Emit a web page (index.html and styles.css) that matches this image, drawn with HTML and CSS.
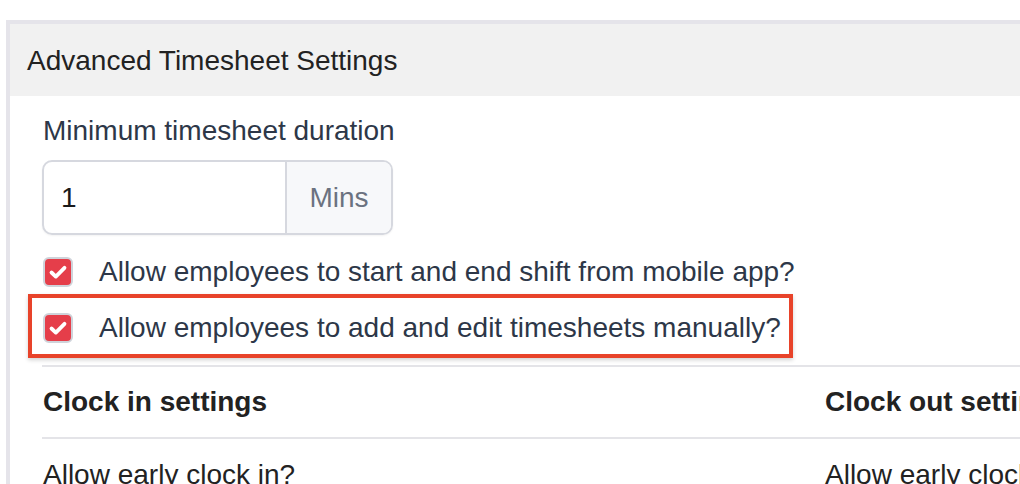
FILE: index.html
```html
<!DOCTYPE html>
<html>
<head>
<meta charset="utf-8">
<link rel="stylesheet" href="styles.css">
</head>
<body>
<div class="panel">
  <div class="panel-head">Advanced Timesheet Settings</div>
  <div class="panel-body">
    <div class="field">
      <div class="label">Minimum timesheet duration</div>
      <div class="input-group">
        <div class="input">1</div>
        <div class="addon">Mins</div>
      </div>
    </div>
    <div class="checks">
      <div class="check-row">
        <span class="box"><svg viewBox="0 0 30 30" width="30" height="30"><path d="M8.5 15.5 L12.8 19.6 L21.5 10.8" fill="none" stroke="#fff" stroke-width="3.8" stroke-linecap="round" stroke-linejoin="round"/></svg></span>
        <span class="check-text">Allow employees to start and end shift from mobile app?</span>
      </div>
      <div class="check-row">
        <span class="box"><svg viewBox="0 0 30 30" width="30" height="30"><path d="M8.5 15.5 L12.8 19.6 L21.5 10.8" fill="none" stroke="#fff" stroke-width="3.8" stroke-linecap="round" stroke-linejoin="round"/></svg></span>
        <span class="check-text">Allow employees to add and edit timesheets manually?</span>
        <span class="highlight"></span>
      </div>
    </div>
    <div class="cols">
      <div class="col">
        <div class="col-head">Clock in settings</div>
        <div class="col-item">Allow early clock in?</div>
      </div>
      <div class="col">
        <div class="col-head">Clock out settings</div>
        <div class="col-item">Allow early clock out?</div>
      </div>
    </div>
  </div>
</div>
</body>
</html>
```
FILE: styles.css
```css
html, body {
  margin: 0;
  padding: 0;
  background: #fff;
  overflow: hidden;
}
body {
  width: 1020px;
  height: 484px;
  font-family: "Liberation Sans", Arial, sans-serif;
}
.panel {
  margin-top: 20px;
  margin-left: 6px;
  width: 1014px;
  border-top: 4px solid #e5e4ea;
  border-left: 4px solid #e5e4ea;
  overflow: hidden;
}
.panel-head {
  height: 72px;
  background: #f1f1f1;
  display: flex;
  align-items: center;
  padding-left: 17px;
  font-size: 28px;
  color: #222;
  padding-top: 2px;
  box-sizing: border-box;
}
.panel-body {
  padding-left: 32px;
  padding-top: 18px;
  background: #fff;
}
.label {
  font-size: 28px;
  line-height: 34px;
  color: #2d3748;
  padding-left: 1px;
}
.input-group {
  margin-top: 12px;
  display: flex;
  width: 351px;
  height: 75px;
  box-sizing: border-box;
  border: 2px solid #d6d8df;
  border-radius: 10px;
  overflow: hidden;
  box-shadow: 0 1px 2px rgba(0,0,0,0.05);
}
.input {
  width: 243px;
  border-right: 2px solid #d6d8df;
  display: flex;
  align-items: center;
  padding-left: 17px;
  box-sizing: border-box;
  font-size: 28px;
  color: #1a1a1a;
}
.addon {
  flex: 1;
  background: #f7f8fa;
  display: flex;
  align-items: center;
  justify-content: center;
  font-size: 28px;
  color: #6b7280;
}
.checks {
  margin-top: 22px;
  display: flex;
  flex-direction: column;
  gap: 26px;
}
.check-row {
  display: flex;
  align-items: center;
  height: 30px;
  position: relative;
}
.box {
  width: 30px;
  height: 30px;
  box-sizing: border-box;
  border-radius: 6px;
  background: #e53e4a;
  border: 2px solid #cfd3da;
  display: flex;
  align-items: center;
  justify-content: center;
  margin-left: 1px;
  flex: none;
}
.box svg {
  display: block;
  flex: none;
}
.check-text {
  margin-left: 26px;
  font-size: 28px;
  color: #2d3748;
  white-space: nowrap;
}
.highlight {
  position: absolute;
  left: -14px;
  top: -19px;
  width: 765px;
  height: 64px;
  box-sizing: border-box;
  border: 4px solid #e8432a;
  box-shadow: 0 2px 4px rgba(0,0,0,0.18);
  pointer-events: none;
}
.cols {
  margin-top: 22px;
  display: flex;
  border-top: 2px solid #e4e4e8;
}
.col {
  width: 782px;
  flex: none;
}
.col-head {
  height: 72px;
  box-sizing: border-box;
  display: flex;
  align-items: center;
  font-size: 28px;
  font-weight: bold;
  color: #222;
  border-bottom: 2px solid #e4e4e8;
  padding-left: 1px;
  white-space: nowrap;
}
.col-item {
  padding-top: 20px;
  font-size: 28px;
  color: #222;
  padding-left: 1px;
  white-space: nowrap;
}
```
